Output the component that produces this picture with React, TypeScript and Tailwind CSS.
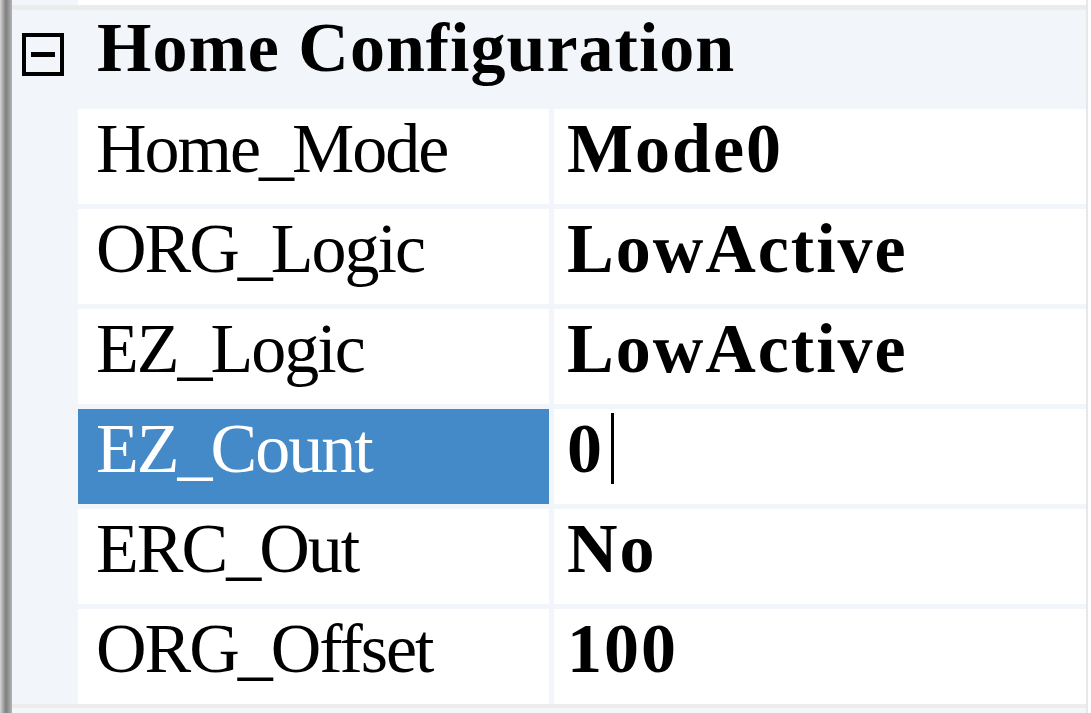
import React from "react";

const rows = [
  { name: "Home_Mode", value: "Mode0" },
  { name: "ORG_Logic", value: "LowActive" },
  { name: "EZ_Logic", value: "LowActive" },
  { name: "EZ_Count", value: "0", selected: true },
  { name: "ERC_Out", value: "No" },
  { name: "ORG_Offset", value: "100" },
];

const serif = { fontFamily: '"Liberation Serif", "Times New Roman", serif' };

export default function App() {
  return (
    <div className="w-[1091px] h-[713px] flex bg-white overflow-hidden" style={serif}>
      {/* left edge of the panel */}
      <div className="w-[12px] h-full bg-linear-to-r from-[#d4d4d4] via-[#7e7e7e] to-[#b4b4b4]" />

      <div className="w-[1074px] flex flex-col">
        {/* tail of the row above */}
        <div className="h-[5px] flex">
          <div className="w-[66px] bg-[#f2f5fa]" />
          <div className="flex-1 bg-white" />
        </div>
        <div className="h-[5px] bg-[#ececec]" />

        {/* category header */}
        <div className="h-[95px] bg-[#f2f5fa] flex items-start">
          <div className="ml-[10px] mt-[23px] w-[42px] h-[43px] border-[4px] border-black flex items-center justify-center">
            <div className="w-[24px] h-[5px] bg-black" />
          </div>
          <span className="ml-[33px] -mt-[1px] text-[70px] leading-[1.107] font-bold tracking-[1px] text-black whitespace-nowrap">
            Home Configuration
          </span>
        </div>

        {/* properties */}
        <div className="flex flex-col gap-[5px] pt-[4px] bg-[#f2f5fa]">
          {rows.map((r) => (
            <div key={r.name} className="h-[95px] flex">
              <div className="w-[66px] bg-[#f2f5fa]" />
              <div
                className={`w-[471px] pl-[18px] pt-[1px] flex items-start ${
                  r.selected ? "bg-[#458ac8] text-white" : "bg-white text-black"
                }`}
              >
                <span className="text-[70px] leading-[1.107] tracking-[-2px] whitespace-nowrap">{r.name}</span>
              </div>
              <div className="w-[5px] bg-[#f2f5fa]" />
              <div className="flex-1 bg-white pl-[13px] pt-[1px] flex items-start">
                <span className="text-[70px] leading-[1.107] font-bold tracking-[2px] text-black whitespace-nowrap">
                  {r.value}
                </span>
                {r.selected && <span className="inline-block w-[3px] h-[71px] bg-black mt-[3px] ml-[7px]" />}
              </div>
            </div>
          ))}
        </div>

        <div className="h-[4px] bg-[#ececec]" />
        <div className="flex-1 bg-[#f4f6fa]" />
      </div>

      {/* right edge */}
      <div className="flex-1 border-l-2 border-[#e8e8e8] bg-white" />
    </div>
  );
}
